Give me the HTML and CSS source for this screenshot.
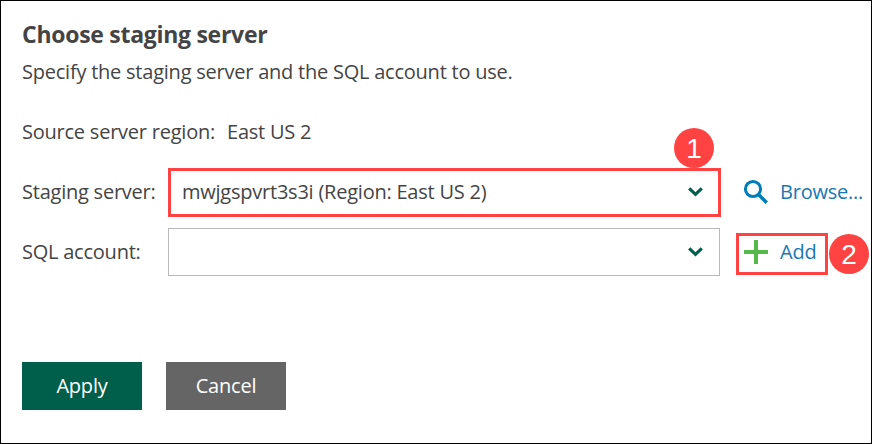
FILE: index.html
```html
<!DOCTYPE html>
<html lang="en">
<head>
<meta charset="utf-8">
<title>Choose staging server</title>
<link rel="stylesheet" href="styles.css">
</head>
<body>
<main class="panel">
  <h1 class="title">Choose staging server</h1>
  <p class="subtitle">Specify the staging server and the SQL account to use.</p>
  <p class="region"><span>Source server region:</span><span>East US 2</span></p>
  <div class="row">
    <span class="label">Staging server:</span>
    <div class="select marked">
      <span>mwjgspvrt3s3i (Region: East US 2)</span>
      <svg class="chevron" width="16" height="10" viewBox="0 0 16 10"><path d="M1.2 1.3 7.5 7.3 13.8 1.3"/></svg>
      <span class="badge badge-one">1</span>
    </div>
    <a class="action">
      <svg width="26" height="26" viewBox="0 0 26 26"><circle cx="10" cy="10" r="7.6" fill="none" stroke="#007db8" stroke-width="3"/><path d="M15.3 15.3 23.7 23.7" stroke="#007db8" stroke-width="3.6"/></svg>
      <span>Browse...</span>
    </a>
  </div>
  <div class="row">
    <span class="label">SQL account:</span>
    <div class="select">
      <span></span>
      <svg class="chevron" width="16" height="10" viewBox="0 0 16 10"><path d="M2.2 1.3 8.5 7.3 14.8 1.3"/></svg>
    </div>
    <a class="action action-marked">
      <svg width="26" height="26" viewBox="0 0 26 26"><path d="M13 1V25M1 13H25" stroke="#54b948" stroke-width="4"/></svg>
      <span>Add</span>
      <span class="badge badge-two">2</span>
    </a>
  </div>
  <div class="buttons">
    <button class="button apply">Apply</button>
    <button class="button cancel">Cancel</button>
  </div>
</main>
</body>
</html>
```
FILE: styles.css
```css
* { box-sizing: border-box; }
body { margin: 0; background: #fff; color: #444; font: 20px/28px "Open Sans", sans-serif; letter-spacing: -0.23px; }
.panel { width: 872px; height: 444px; border: 1px solid #000; padding: 19px 0 0 21px; overflow: hidden; }
.title { margin: 0; font-size: 23px; line-height: 28px; font-weight: 700; letter-spacing: -0.28px; }
.subtitle { margin: 10px 0 0; }
.region { margin: 32px 0 22px; display: flex; gap: 12px; }
.row { display: flex; align-items: center; height: 48px; margin-bottom: 12px; white-space: nowrap; }
.label { width: 146px; flex: none; }
.select { position: relative; width: 552px; height: 48px; flex: none; border: 1px solid #bababa; padding: 0 16px 0 13px; display: flex; align-items: center; justify-content: space-between; }
.marked { width: 553px; height: 49px; align-self: flex-start; margin-right: -1px; border: 3px solid #ff4343; padding: 0 14px 0 11px; }
.marked > span:first-child, .chevron { margin-bottom: 1px; }
.chevron { fill: none; stroke: #005f4b; stroke-width: 3.2; }
.action { position: relative; display: flex; align-items: center; gap: 11px; height: 42px; margin-left: 16px; padding-left: 7px; color: #1778b2; }
.action-marked { width: 92px; border: 3px solid #ff4343; padding: 0 0 5px 4px; margin-top: 4px; }
.badge { position: absolute; width: 40px; height: 40px; border-radius: 50%; background: #ff4343; color: #fff; font: 28px/41px "Liberation Sans", sans-serif; letter-spacing: 0; text-align: center; }
.badge-one { right: 4px; top: -43px; }
.badge-two { left: 90px; top: -2px; }
.buttons { display: flex; gap: 24px; margin-top: 86px; }
.button { width: 120px; height: 48px; border: 0; padding: 0; color: #fff; font: 20px/28px "Open Sans", sans-serif; letter-spacing: -0.2px; }
.apply { background: #005f4b; }
.cancel { background: #656565; }
```
